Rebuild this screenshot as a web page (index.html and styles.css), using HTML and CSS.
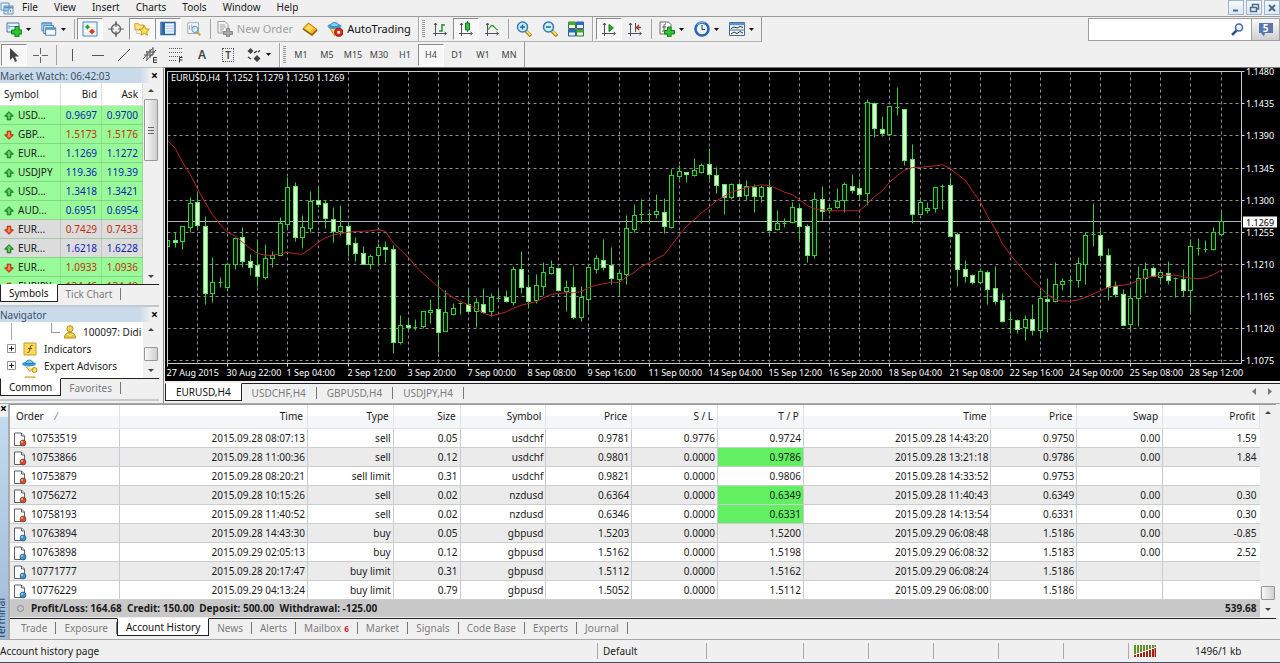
FILE: index.html
```html
<!DOCTYPE html>
<html lang="en">
<head>
    <meta charset="UTF-8">
    <meta name="viewport" content="width=device-width, initial-scale=1.0">
    <title>EURUSD,H4</title>
    <link rel="stylesheet" href="styles.css">
</head>
<body>
    <svg class="sprite" aria-hidden="true">
        <symbol id="caret" viewBox="0 0 5 3"><path d="M0 0h5L2.5 3z" fill="#111"/></symbol>
        <symbol id="arrow-up" viewBox="0 0 10 10"><path d="M5 .7L9.4 5 6.8 5.4V8.8H3.2V5.4L.6 5z" fill="#3fae3f" stroke="#127a1c"/><path d="M5 2.4v5" stroke="#9be29b"/></symbol>
        <symbol id="arrow-down" viewBox="0 0 10 10"><path d="M5 9.3L.6 5l2.6-.4V1.2h3.6v3.4l2.6.4z" fill="#f0562c" stroke="#b32a10"/><path d="M5 2.4v4.6" stroke="#ffc09a"/></symbol>
        <symbol id="doc" viewBox="0 0 14 15"><path d="M1.5 1h7l3 3v9.500h-10z" fill="#fff" stroke="#5c6066"/><path d="M8.500 1v3h3" fill="#dde" stroke="#5c6066"/></symbol>
        <symbol id="plus-box" viewBox="0 0 9 9"><path d="M.5.5h8v8h-8z" fill="#fff" stroke="#919191"/><path d="M2 4.500h5M4.500 2v5" stroke="#222"/></symbol>
        <symbol id="axes" viewBox="0 0 16 16"><path d="M3.500 15V2M1 12.500h13M2 4l1.500-2L5 4M12.500 11l2 1.500-2 1.500" fill="none" stroke="#4c5258"/></symbol>
        <symbol id="lens" viewBox="0 0 16 16"><path d="M10 10l5 5" stroke="#a97a1c" stroke-width="3.500"/><path d="M10.500 10l4 4" stroke="#ffd95e" stroke-width="2"/><circle cx="6.500" cy="6" r="5" fill="#d3effc" stroke="#2d7db8" stroke-width="1.500"/></symbol>
    </svg>

    <div class="app">
        <header class="menubar">
            <svg class="app-icon" viewBox="0 0 14 13"><path d="M1 1h8v7H1zM4 4h9v8H4z" fill="#e5f1fa" stroke="#5f93bd"/><path d="M4 5.500h9" stroke="#5f93bd" stroke-width="2"/><path d="M6 10V8M8 11V8M10.500 10V8" stroke="#4a90c4"/></svg>
            <nav class="menus">
                <a href="#">File</a><a href="#">View</a><a href="#">Insert</a><a href="#">Charts</a><a href="#">Tools</a><a href="#">Window</a><a href="#">Help</a>
            </nav>
            <div class="window-buttons">
                <button aria-label="Minimize"><svg viewBox="0 0 12 10"><path d="M3 7.500h5" stroke="#4e6a88" stroke-width="2"/></svg></button>
                <button aria-label="Restore"><svg viewBox="0 0 12 10"><path d="M4.500 4V1.500h6V6H8.500M2.500 4.500h6v4h-6z" fill="none" stroke="#4e6a88" stroke-width="1.400"/></svg></button>
                <button aria-label="Close"><svg viewBox="0 0 12 10"><path d="M3 2l6 6M9 2L3 8" stroke="#4e6a88" stroke-width="2"/></svg></button>
            </div>
        </header>

        <div class="toolbar-row">
            <div class="toolbar">
                <button class="tool drop" aria-label="New chart"><svg viewBox="0 0 16 16"><path d="M1 2h12v9H1z" fill="#e9f3fb" stroke="#43749f"/><path d="M3 8V4M3 5.500h6" stroke="#6f9cc2"/><path d="M9 5.500h4V9h3v4h-3v3H9v-3H5.500V9H9z" fill="#2fc52f" stroke="#0f7d16"/></svg><svg class="caret"><use href="#caret"/></svg></button>
                <button class="tool drop" aria-label="Profiles"><svg viewBox="0 0 18 16"><path d="M1 1h11v9H1z" fill="#dfeefa" stroke="#3f78ae"/><path d="M3 4h11v9H3z" fill="#dfeefa" stroke="#3f78ae"/><path d="M5 6.500h11.500v8.500H5z" fill="#f5faff" stroke="#3f78ae"/><path d="M1 2h11M5 8h11" stroke="#67a0d4" stroke-width="2"/></svg><svg class="caret"><use href="#caret"/></svg></button>
                <span class="sep"></span>
                <button class="tool pressed" aria-label="Market Watch"><svg viewBox="0 0 16 16"><path d="M1 1h14v14H1z" fill="#fff" stroke="#3c83bd"/><path d="M2 3h12M2 6h12M2 9h12M2 12h12" stroke="#d5e4ee"/><path d="M5.500 3.500l2.500 2.500-2.500 2.500L3 6z" fill="#22a02c"/><path d="M10 7.500l3 3-3 3-3-3z" fill="#e23c1d"/></svg></button>
                <button class="tool" aria-label="Data Window"><svg viewBox="0 0 16 16"><circle cx="8" cy="8" r="4.500" fill="none" stroke="#666" stroke-width="1.500"/><path d="M8 0v6M8 10v6M0 8h6M10 8h6" stroke="#666"/><path d="M6.500 3L8 .5 9.500 3M6.500 13L8 15.500 9.500 13" fill="#666"/></svg></button>
                <button class="tool pressed" aria-label="Navigator"><svg viewBox="0 0 18 16"><path d="M1 2h4l1 1.500h5V9H1z" fill="#ffe489" stroke="#c8961d"/><path d="M3 10v3h4" fill="none" stroke="#999" stroke-dasharray="1 1"/><path d="M11.500 4l1.800 3.800 4 .4-3 2.800.9 4-3.700-2-3.700 2 .9-4-3-2.800 4-.4z" fill="#ffdf4e" stroke="#be8b12"/></svg></button>
                <button class="tool pressed" aria-label="Terminal"><svg viewBox="0 0 16 16"><path d="M1 1.500h14v12H1z" fill="#e7f1fb" stroke="#2d66a2" stroke-width="1.500"/><path d="M3.500 2v11" stroke="#2d66a2" stroke-width="3"/><path d="M6 5h8M6 7.500h8M6 10h8" stroke="#b7cfe4"/></svg></button>
                <button class="tool" aria-label="Strategy Tester"><svg viewBox="0 0 18 16"><path d="M2 1h12v12H2z" fill="#fff" stroke="#8aa0b2"/><path d="M4 9V4M6.500 7V3M9 10V4" stroke="#7c93a6"/><path d="M12 11l4 4" stroke="#d8a03a" stroke-width="2.500"/><circle cx="10" cy="8.500" r="3.500" fill="#cfe8fa" fill-opacity=".8" stroke="#4a83b5"/></svg></button>
                <span class="sep"></span>
                <button class="tool labelled" disabled><svg viewBox="0 0 16 16"><path d="M1 .5h7l3 3V12H1z" fill="#f4f4f4" stroke="#9a9a9a"/><path d="M3 4h5M3 6h6M3 8h4M3 10h3" stroke="#a2a2a2"/><path d="M9.500 7.500h3v3h3v3h-3V16h-3v-2.500h-3v-3h3z" fill="#a7a7a7" stroke="#858585"/></svg>New Order</button>
                <button class="tool" aria-label="MetaEditor"><svg viewBox="0 0 16 16"><path d="M1 7.500L6.500 2l8.500 6.500-5 5z" fill="#f5b81d" stroke="#b5780b"/><path d="M3 7.500L7 3.500l4.500 3.500-4 4z" fill="#ffdb62"/><path d="M1 8l9 6 5-5" fill="none" stroke="#8f5d08" stroke-width="1.500"/></svg></button>
                <button class="tool labelled auto"><svg viewBox="0 0 17 16"><path d="M3 7l5 8 6-7z" fill="#f7cf52" stroke="#b98a1b"/><ellipse cx="8" cy="5" rx="7.500" ry="3" fill="#3e9fd9"/><path d="M3.500 4.500C4 0 12 0 12.500 4.500 10 6 6 6 3.500 4.500z" fill="#88cef2" stroke="#3284bb"/><circle cx="12.500" cy="11.500" r="4.300" fill="#d92918" stroke="#941207"/><path d="M11 10h3v3h-3z" fill="#fff"/></svg>AutoTrading</button>
                <span class="sep end"></span><span class="grip"></span>
                <button class="tool" aria-label="Bar Chart"><svg viewBox="0 0 16 16"><use href="#axes"/><path d="M7 10h3V3.500M10 4h3M10 10.500V3" fill="none" stroke="#21942c" stroke-width="1.500"/></svg></button>
                <button class="tool pressed" aria-label="Candlesticks"><svg viewBox="0 0 16 16"><use href="#axes"/><path d="M9.500 0v11" stroke="#15761e"/><path d="M7.500 2h4v7h-4z" fill="#37c043" stroke="#15761e"/></svg></button>
                <button class="tool" aria-label="Line Chart"><svg viewBox="0 0 16 16"><use href="#axes"/><path d="M3 9c3-1 3-4.500 5-4.500S11 8 14 9" fill="none" stroke="#2c9d38" stroke-width="1.300"/></svg></button>
                <span class="sep"></span>
                <button class="tool" aria-label="Zoom In"><svg viewBox="0 0 16 16"><use href="#lens"/><path d="M4 6h5M6.500 3.500v5" stroke="#2369a1" stroke-width="1.500"/></svg></button>
                <button class="tool" aria-label="Zoom Out"><svg viewBox="0 0 16 16"><use href="#lens"/><path d="M4 6h5" stroke="#2369a1" stroke-width="1.500"/></svg></button>
                <button class="tool" aria-label="Tile Windows"><svg viewBox="0 0 16 16"><path d="M.5 1h7v6.500h-7zM8.500 8.500h7V15h-7z" fill="#eef8e9" stroke="#32762c"/><path d="M8.500 1h7v6.500h-7zM.5 8.500h7V15h-7z" fill="#e8f2fc" stroke="#265d9c"/><path d="M.5 2.500h7M8.500 10h7" stroke="#4fa733" stroke-width="3"/><path d="M8.500 2.500h7M.5 10h7" stroke="#2c6fbb" stroke-width="3"/></svg></button>
                <span class="sep end"></span>
                <button class="tool pressed" aria-label="Auto Scroll"><svg viewBox="0 0 16 16"><use href="#axes"/><path d="M8 3.500l4.500 3.500L8 10.500z" fill="#2aad37" stroke="#157a20"/></svg></button>
                <button class="tool" aria-label="Chart Shift"><svg viewBox="0 0 16 16"><use href="#axes"/><path d="M8.500 2v9" stroke="#4c5258"/><path d="M14 6.500H9.500M12 4L9.500 6.500 12 9" fill="none" stroke="#a5381f" stroke-width="1.400"/></svg></button>
                <span class="sep"></span>
                <button class="tool drop" aria-label="Indicators"><svg viewBox="0 0 16 16"><path d="M1 1h8.500L12 3.500V13H1z" fill="#fff" stroke="#666"/><path d="M7 3c-2-.5-2 1-2 3v3c0 1.500-1 1.500-2 1M3 6h4" fill="none" stroke="#555"/><path d="M8.500 6h3.500v3.500h3.500V13H12v3H8.500v-3H5.500V9.500h3z" fill="#2fc52f" stroke="#0f7d16"/></svg><svg class="caret"><use href="#caret"/></svg></button>
                <button class="tool drop" aria-label="Periods"><svg viewBox="0 0 16 16"><circle cx="8" cy="8" r="6.500" fill="#edf6fd" stroke="#2268ae" stroke-width="2.500"/><path d="M3 4a6.500 6.500 0 0 1 8-2" fill="none" stroke="#7ab9ea" stroke-width="1.200"/><path d="M8 4v4.500h3" fill="none" stroke="#333"/></svg><svg class="caret"><use href="#caret"/></svg></button>
                <button class="tool drop" aria-label="Templates"><svg viewBox="0 0 16 16"><path d="M.5 1.500h15v13H.5z" fill="#f4f9fd" stroke="#426c94"/><path d="M.5 3h15" stroke="#5c95c8" stroke-width="2.500"/><path d="M1 9h14" stroke="#426c94"/><path d="M2 7.500l3-1.500 3 1 3-1.500 3 1M2 13l3-2 3 1.500 3-2 3 1.500" fill="none" stroke="#333"/></svg><svg class="caret"><use href="#caret"/></svg></button>
            </div>
            <form class="search">
                <input type="text" aria-label="Search">
                <button type="button" class="find" aria-label="Find"><svg viewBox="0 0 13 13"><circle cx="8" cy="4.500" r="3.500" fill="#f0f6fc" stroke="#4168a8" stroke-width="1.500"/><path d="M5.500 7.500L1 12" stroke="#31558f" stroke-width="2.500"/></svg></button>
                <button type="button" class="chat" aria-label="Messages"><svg viewBox="0 0 16 15"><path d="M1 1h14v10H7l-1 3.500L3 11H1z" fill="#5b76ad"/></svg><span>5</span></button>
            </form>
        </div>

        <div class="toolbar-row second">
            <div class="toolbar">
                <button class="tool pressed" aria-label="Cursor"><svg viewBox="0 0 16 16"><path d="M4 1v12l3-2.700L9 15l2-1-2-4.500h4z" fill="#444"/></svg></button>
                <button class="tool" aria-label="Crosshair"><svg viewBox="0 0 16 16"><path d="M8.500 1v6M8.500 10v6M1 8.500h6M10 8.500h6" stroke="#666"/></svg></button>
                <span class="sep"></span>
                <button class="tool" aria-label="Vertical Line"><svg viewBox="0 0 16 16"><path d="M8.500 2v12" stroke="#555"/></svg></button>
                <button class="tool" aria-label="Horizontal Line"><svg viewBox="0 0 16 16"><path d="M2 8.500h12" stroke="#555"/></svg></button>
                <button class="tool" aria-label="Trendline"><svg viewBox="0 0 16 16"><path d="M2 14L14 2" stroke="#555"/></svg></button>
                <button class="tool" aria-label="Equidistant Channel"><svg viewBox="0 0 16 16"><path d="M1 12L11 1M4 14L14 3M2 8h9M4 5h9M5 13V4M8 11V2M11 8V0" stroke="#555"/><path d="M15 10.500h-3.500v5H15M11.500 13H15" fill="none" stroke="#333"/></svg></button>
                <button class="tool" aria-label="Fibonacci"><svg viewBox="0 0 16 16"><path d="M1 1.500h14M1 5.500h14M1 9.500h14M1 13.500h8" stroke="#555" stroke-dasharray="1 1"/><path d="M14.500 10.500h-3v5M11.500 13h3" fill="none" stroke="#333"/></svg></button>
                <button class="tool letter">A</button>
                <button class="tool letter"><span class="boxed">T</span></button>
                <button class="tool drop" aria-label="Arrows"><svg viewBox="0 0 16 16"><path d="M4.500 1l3 3-3 3-3-3zM11 8l3.500 3.500L11 15l-3.500-3.500z" fill="#444"/><path d="M8 6l3-2M2 10l3 2M12 5l2-1.500" stroke="#444" stroke-width="1.500"/></svg><svg class="caret"><use href="#caret"/></svg></button>
                <span class="sep end"></span><span class="grip"></span>
                <button class="tool">M1</button><button class="tool">M5</button><button class="tool">M15</button><button class="tool">M30</button><button class="tool">H1</button><button class="tool pressed">H4</button><button class="tool">D1</button><button class="tool">W1</button><button class="tool">MN</button>
            </div>
        </div>

        <main class="workspace">
            <aside class="dock">
                <section class="panel">
                    <h2>Market Watch: 06:42:03<button class="close" aria-label="Close">×</button></h2>
                    <div class="scroll-area market">
                        <table class="quotes">
                            <colgroup><col class="q-symbol"><col class="q-bid"><col class="q-ask"></colgroup>
                            <thead><tr><th>Symbol</th><th>Bid</th><th>Ask</th></tr></thead>
                            <tbody id="quotes"></tbody>
                        </table>
                        <div class="scrollbar"><span class="up"></span><span class="thumb long"></span><span class="down"></span></div>
                    </div>
                    <div class="tabs"><button class="active">Symbols</button><button>Tick Chart</button></div>
                </section>
                <section class="panel">
                    <h2>Navigator<button class="close" aria-label="Close">×</button></h2>
                    <div class="scroll-area navigator">
                        <ul class="tree">
                            <li class="account"><svg viewBox="0 0 14 15"><circle cx="7" cy="4" r="3.300" fill="#f5d255" stroke="#b18a1c"/><path d="M1 14c0-4 2-6 6-6s6 2 6 6z" fill="#efc33a" stroke="#b18a1c"/><path d="M4 9.500l3 2 3-2" fill="none" stroke="#fff3b5"/></svg>100097: Didi</li>
                            <li><svg class="toggle"><use href="#plus-box"/></svg><svg viewBox="0 0 14 14"><path d="M1 1h12v12H1z" fill="#fbd95f" stroke="#c79b24"/><path d="M9.500 3.500c-2-.5-2 .5-2.500 3s-.5 4.500-2.500 4M5 6.500h4" fill="none" stroke="#634c0c"/></svg>Indicators</li>
                            <li><svg class="toggle"><use href="#plus-box"/></svg><svg viewBox="0 0 16 14"><ellipse cx="7" cy="5" rx="7" ry="2.500" fill="#3d9ad4"/><path d="M3.500 4.500C4 0 10.500 0 11 4.500z" fill="#7cc6ee" stroke="#2f83ba"/><path d="M4 7.500l4 5 3-3" fill="#fae08b" stroke="#c2962d"/><circle cx="12.500" cy="11" r="2.500" fill="#ffe064" stroke="#b98b15"/></svg>Expert Advisors</li>
                            <li><svg class="toggle"></svg><svg viewBox="0 0 14 14"><path d="M2 1h10v12H2z" fill="#fbe08a" stroke="#c79b24"/></svg></li>
                        </ul>
                        <div class="scrollbar"><span class="up"></span><span class="thumb low"></span><span class="down"></span></div>
                    </div>
                    <div class="tabs"><button class="active">Common</button><button>Favorites</button></div>
                </section>
            </aside>

            <section class="chart-window">
                <svg id="chart" class="chart" viewBox="0 0 1115 313" role="img" aria-label="EURUSD,H4"></svg>
                <div class="tabs chart-tabs">
                    <button class="active">EURUSD,H4</button><button>USDCHF,H4</button><button>GBPUSD,H4</button><button>USDJPY,H4</button>
                    <span class="pager"><svg viewBox="0 0 20 7"><path d="M4 0v7L0 3.500zM16 0v7l4-3.500z" fill="#777"/></svg></span>
                </div>
            </section>
        </main>

        <section class="terminal">
            <div class="side"><button class="close" aria-label="Close">×</button><span>Terminal</span></div>
            <div class="terminal-main">
                <div class="scroll-area">
                    <table class="history">
                        <colgroup>
                            <col class="c-order"><col class="c-time"><col class="c-num"><col class="c-size"><col class="c-num"><col class="c-num"><col class="c-num"><col class="c-num"><col class="c-time"><col class="c-num"><col class="c-num"><col class="c-profit">
                        </colgroup>
                        <thead><tr><th>Order <i>/</i></th><th>Time</th><th>Type</th><th>Size</th><th>Symbol</th><th>Price</th><th>S / L</th><th>T / P</th><th>Time</th><th>Price</th><th>Swap</th><th>Profit</th></tr></thead>
                        <tbody id="history"></tbody>
                        <tfoot><tr><td colspan="11"><span class="dot"></span>Profit/Loss: 164.68&nbsp; Credit: 150.00&nbsp; Deposit: 500.00&nbsp; Withdrawal: -125.00</td><td>539.68</td></tr></tfoot>
                    </table>
                    <div class="scrollbar"><span class="up"></span><span class="thumb low"></span><span class="down"></span></div>
                </div>
                <div class="tabs terminal-tabs">
                    <button>Trade</button><button>Exposure</button><button class="active">Account History</button><button>News</button><button>Alerts</button><button>Mailbox<b>6</b></button><button>Market</button><button>Signals</button><button>Code Base</button><button>Experts</button><button>Journal</button>
                </div>
            </div>
        </section>

        <footer class="statusbar">
            <span class="hint">Account history page</span>
            <span class="profile">Default</span>
            <span class="cell wide"></span><span class="cell"></span><span class="cell"></span><span class="cell"></span><span class="cell"></span><span class="cell"></span>
            <span class="traffic"><svg viewBox="0 0 22 12"><path d="M1 0v9M4 0v8M7 0v7M10 0v6M13 0v5M16 0v4M19 0v3M21.500 0v2" stroke="#5f9423" stroke-width="2"/><path d="M1 12v-2M4 12V9M7 12V8M10 12V7M13 12V6M16 12V5M19 12V4M21.500 12V3" stroke="#a32317" stroke-width="2"/></svg>1496/1 kb</span>
        </footer>
    </div>

    <script src="script.js"></script>
</body>
</html>
```
FILE: styles.css
```css
* {
    box-sizing: border-box;
}
body {
    margin: 0;
    background-color: #f0f0f0;
    color: #1a1a1a;
    font-family: "Noto Sans", "Open Sans", sans-serif;
    font-size: 10px;
    line-height: 14px;
}
button, input {
    font: inherit;
    color: inherit;
    margin: 0;
    padding: 0;
    border: none;
    background: none;
}
.sprite {
    display: none;
}
.app {
    display: flex;
    flex-direction: column;
    min-height: 100vh;
    border-bottom: 1px solid #3f4f66;
}

/* menu */
.menubar {
    display: flex;
    align-items: center;
    height: 17px;
    border-bottom: 1px solid #9a9a9a;
}
.app-icon {
    width: 14px;
    height: 13px;
}
.menus {
    display: flex;
    flex: 1;
    gap: 16px;
    padding: 0 0 2px 8px;
}
.menus a {
    color: #1a1a1a;
    text-decoration: none;
}
.window-buttons {
    display: flex;
    gap: 2px;
    align-self: flex-start;
}
.window-buttons button {
    width: 16px;
    height: 15px;
    border: 1px solid #9db4cc;
    background: linear-gradient(#f4f9fe, #dbe8f5);
}
.window-buttons svg {
    display: block;
    width: 12px;
    height: 10px;
    margin: auto;
}

/* toolbars */
.toolbar-row {
    display: flex;
    justify-content: space-between;
    height: 25px;
}
.toolbar {
    display: flex;
    align-items: center;
    padding: 0 2px 0 1px;
    border-right: 1px solid #999;
    border-bottom: 1px solid #b4b4b4;
}
.second .toolbar {
    border-bottom: none;
}
.tool {
    display: flex;
    align-items: center;
    justify-content: center;
    width: 26px;
    height: 22px;
    color: #444;
    font-size: 9px;
}
.tool svg {
    width: 16px;
    height: 16px;
}
.tool.drop {
    width: 35px;
    gap: 4px;
}
.tool svg.caret {
    width: 5px;
    height: 3px;
}
.tool.pressed {
    border: 1px solid;
    border-color: #8c8c8c #fff #fff #8c8c8c;
    background-color: #f8f8f8;
}
.tool.labelled {
    width: 84px;
    gap: 4px;
    font-size: 11px;
}
.tool.auto {
    width: 92px;
    color: #111;
}
.tool:disabled {
    color: #a0a0a0;
}
.tool.letter {
    font-size: 12px;
    font-weight: 600;
}
.boxed {
    padding: 0 2px;
    border: 1px dotted #555;
    line-height: 12px;
    font-size: 10px;
}
.sep {
    width: 1px;
    height: 20px;
    margin: 0 2px 0 3px;
    background-color: #a5a5a5;
}
.sep.end {
    width: 2px;
    height: 24px;
    border-right: 1px solid #fff;
}
.grip {
    width: 3px;
    height: 18px;
    margin-right: 2px;
    background: repeating-linear-gradient(#999 0 1px, #f0f0f0 1px 2px);
}
.search {
    display: flex;
    align-items: center;
    height: 23px;
    margin-top: 1px;
    border: 1px solid #a0a0a0;
    background-color: #fff;
}
.search input {
    width: 142px;
    height: 20px;
    outline: none;
}
.find {
    width: 20px;
}
.find svg {
    display: block;
    width: 13px;
    height: 13px;
}
.chat {
    display: grid;
    place-items: center;
    width: 28px;
    height: 21px;
    border-left: 1px solid #a0a0a0;
    background: linear-gradient(#fafafa, #cfcfcf);
}
.chat svg, .chat span {
    grid-area: 1 / 1;
}
.chat svg {
    width: 16px;
    height: 15px;
}
.chat span {
    padding-bottom: 3px;
    line-height: 10px;
    color: #fff;
    font-weight: bold;
}

/* docked panels */
.workspace {
    display: flex;
    border-bottom: 1px solid #a9a9a9;
}
.dock {
    width: 164px;
    padding-right: 4px;
    border-top: 1px solid #bdbdbd;
    border-right: 1px solid #888;
}
.panel {
    border-bottom: 2px solid #c3c9d0;
}
.panel h2 {
    display: flex;
    justify-content: space-between;
    align-items: center;
    height: 15px;
    margin: 0;
    background: linear-gradient(90deg, #c9dbeb 0 88%, #f0f0f0 95%);
    color: #3c5068;
    font-size: 10px;
    font-weight: normal;
}
.close {
    width: 9px;
    line-height: 10px;
    color: #000;
    font-size: 12px;
    font-weight: bold;
}
.scroll-area {
    display: flex;
    overflow: hidden;
}
.market {
    height: 201px;
}
.quotes {
    flex: 1;
    height: 0;
    table-layout: fixed;
    border-collapse: collapse;
    background-color: #fff;
}
.q-symbol {
    width: 61px;
}
.q-bid, .q-ask {
    width: 41px;
}
.quotes th, .quotes td {
    height: 19px;
    padding: 0 4px 0 0;
    border-right: 1px solid rgba(130, 170, 130, .35);
    border-bottom: 1px solid rgba(110, 180, 110, .5);
    text-align: right;
}
.quotes th {
    height: 22px;
    border-color: #ddd;
    font-weight: normal;
}
.quotes th:first-child, .quotes td:first-child {
    padding-left: 4px;
    text-align: left;
}
.quotes td {
    background-color: #98fb98;
}
.quotes .flat td {
    background-color: #dcdcdc;
}
.quotes svg {
    width: 10px;
    height: 10px;
    margin-right: 4px;
    vertical-align: -2px;
}
.quotes .rise td + td {
    color: #0a1fb4;
}
.quotes .fall td + td {
    color: #c0300c;
}
.scrollbar {
    display: flex;
    flex-direction: column;
    align-items: center;
    width: 16px;
    padding: 6px 0;
    background-color: #f0f0f0;
}
.scrollbar .up, .scrollbar .down {
    border: 3px solid transparent;
    border-top: none;
    border-bottom: 3px solid #444;
}
.scrollbar .down {
    margin-top: auto;
    border-bottom: none;
    border-top: 3px solid #444;
}
.thumb {
    width: 14px;
    height: 14px;
    border: 1px solid #999;
    border-radius: 1px;
    background: linear-gradient(90deg, #f8f8f8, #cfcfcf);
}
.thumb.long {
    display: grid;
    place-items: center;
    height: 62px;
    margin-top: 7px;
}
.thumb.long::before {
    content: "";
    width: 6px;
    height: 7px;
    background: repeating-linear-gradient(#666 0 1px, transparent 1px 3px);
}
.thumb.low {
    margin-top: auto;
}
.scrollbar .low + .down {
    margin-top: 8px;
}
.tabs {
    display: flex;
    border-top: 1px solid #222;
    color: #7c7c7c;
}
.tabs button {
    height: 12px;
    margin-top: 3px;
    padding: 0 8px;
    border-right: 1px solid #777;
    line-height: 12px;
}
.tabs .active {
    height: 18px;
    margin-top: -1px;
    border: 1px solid #222;
    border-top: 1px solid #fff;
    background-color: #fff;
    color: #111;
    line-height: 14px;
}
.dock .tabs {
    height: 21px;
}
.navigator {
    height: 56px;
    background-color: #fff;
}
.tree {
    flex: 1;
    margin: 0;
    padding: 1px 0 0;
    list-style: none;
    white-space: nowrap;
    overflow: hidden;
}
.tree li {
    display: flex;
    align-items: center;
    gap: 6px;
    height: 17px;
    padding-left: 7px;
}
.tree li svg {
    width: 16px;
    height: 14px;
}
.tree li svg.toggle {
    width: 9px;
    height: 9px;
}
.tree .account {
    padding-left: 62px;
    background: linear-gradient(90deg, #999, #999) 51px 9px / 9px 1px no-repeat, linear-gradient(#999, #999) 51px 0 / 1px 9px no-repeat, linear-gradient(#aaa, #aaa) 11px 0 / 1px 17px no-repeat;
    gap: 5px;
}

/* chart */
.chart-window {
    display: flex;
    flex: 1;
    flex-direction: column;
    min-width: 0;
    padding-left: 1px;
    border-top: 1px solid #777;
}
.chart {
    display: block;
    width: 100%;
    background-color: #000;
}
.chart text {
    fill: #fff;
    font-size: 9px;
}
.chart .title {
    font-size: 9px;
}
.chart .grid {
    stroke: #8b9096;
    stroke-dasharray: 3 3;
}
.chart .frame {
    fill: none;
    stroke: #d0d0d0;
}
.chart .bid {
    stroke: #a9b0b8;
}
.chart .average {
    fill: none;
    stroke: #b8262c;
}
.chart .wick, .chart .bull {
    stroke: #35cf35;
}
.chart .bull {
    fill: #001a00;
}
.chart .bear {
    fill: #d6ffd0;
    stroke: #5fe65f;
}
.chart .tag {
    fill: #fff;
}
.chart .tag-text {
    fill: #000;
}
.chart-tabs {
    height: 20px;
    margin-top: 2px;
}
.chart-tabs button {
    padding: 0 10px;
}
.pager {
    margin: 4px 8px 0 auto;
}
.pager svg {
    display: block;
    width: 20px;
    height: 7px;
}

/* terminal */
.terminal {
    display: flex;
    padding-right: 4px;
}
.side {
    display: flex;
    flex-direction: column;
    justify-content: space-between;
    width: 10px;
    overflow: hidden;
    background: linear-gradient(#f0f0f0 13px, #c3daef 13px, #9dbad8);
    border-right: 2px solid #aaa;
}
.side .close {
    width: 6px;
}
.side span {
    width: 14px;
    margin-left: -6px;
    writing-mode: vertical-rl;
    transform: rotate(180deg);
    color: #24405f;
}
.terminal-main {
    flex: 1;
    min-width: 0;
    border-top: 1px solid #999;
}
.history {
    flex: 1;
    table-layout: fixed;
    border-collapse: collapse;
    background-color: #fff;
}
.c-order {
    width: 110px;
}
.c-time {
    width: 188px;
}
.c-num {
    width: 86px;
}
.c-size {
    width: 67px;
}
.c-profit {
    width: 97px;
}
.history th, .history td {
    height: 19px;
    padding: 0 2px 0 0;
    border-right: 1px solid #c8ccd1;
    border-bottom: 1px solid #ccc;
    text-align: right;
}
.history th {
    height: 23px;
    padding-right: 4px;
    border-color: #e2e2e2;
    background: linear-gradient(#fff 50%, #f5f6f7 50%);
    font-weight: normal;
}
.history th:first-child {
    padding-left: 6px;
    text-align: left;
}
.history th i {
    margin-left: 8px;
    color: #888;
}
.history tbody tr:nth-child(even) td {
    background-color: #ebebeb;
}
.history tbody td:first-child {
    padding-left: 3px;
    text-align: left;
}
.history td:last-child {
    padding-right: 3px;
    border-right: none;
}
.history tbody tr td.hit, .history tbody tr:nth-child(even) td.hit {
    background-color: #62f062;
}
.history svg {
    width: 14px;
    height: 15px;
    margin: -2px 4px -2px 0;
    vertical-align: -3px;
}
.history tfoot td {
    height: 18px;
    border: none;
    background-color: #c8c8c8;
    font-weight: bold;
}
.history tfoot td:first-child {
    padding-left: 7px;
    text-align: left;
}
.dot {
    display: inline-block;
    width: 7px;
    height: 7px;
    margin-right: 7px;
    border: 1px solid #888;
    border-radius: 50%;
}
.terminal-tabs {
    height: 21px;
    margin-top: 1px;
    padding-left: 3px;
}
.terminal-tabs b {
    margin-left: 3px;
    color: #d81e2c;
    font-size: 8px;
}

/* status bar */
.statusbar {
    display: flex;
    flex: 1;
    align-items: center;
    min-height: 21px;
    border-top: 1px solid #a9a9a9;
}
.statusbar span {
    display: flex;
    align-items: center;
    height: 16px;
    padding-left: 5px;
    border-left: 1px solid #aaa;
}
.statusbar .hint {
    flex: 1;
    padding: 0;
    border: none;
}
.statusbar .profile {
    width: 109px;
}
.statusbar .cell {
    width: 65px;
}
.statusbar .cell.wide {
    width: 97px;
}
.statusbar .traffic {
    width: 152px;
    gap: 39px;
}
.traffic svg {
    width: 22px;
    height: 12px;
}
```
FILE: script.js
```js
// Quotes: symbol, bid, ask, direction, no change today
const quotes = [
    ["USD...", "0.9697", "0.9700", "rise"],
    ["GBP...", "1.5173", "1.5176", "fall"],
    ["EUR...", "1.1269", "1.1272", "rise"],
    ["USDJPY", "119.36", "119.39", "rise"],
    ["USD...", "1.3418", "1.3421", "rise"],
    ["AUD...", "0.6951", "0.6954", "rise"],
    ["EUR...", "0.7429", "0.7433", "fall", true],
    ["EUR...", "1.6218", "1.6228", "rise", true],
    ["EUR...", "1.0933", "1.0936", "fall"],
    ["EURJPY", "134.46", "134.49", "fall"]
];

document.getElementById("quotes").innerHTML = quotes.map(([symbol, bid, ask, dir, flat]) => `
    <tr class="${dir}${flat ? " flat" : ""}">
        <td><svg><use href="#arrow-${dir === "rise" ? "up" : "down"}"/></svg>${symbol}</td>
        <td>${bid}</td><td>${ask}</td>
    </tr>`).join("");

const orders = [
    ["10753519", "2015.09.28 08:07:13", "sell", "0.05", "usdchf", "0.9781", "0.9776", "0.9724", "2015.09.28 14:43:20", "0.9750", "0.00", "1.59"],
    ["10753866", "2015.09.28 11:00:36", "sell", "0.12", "usdchf", "0.9801", "0.0000", "0.9786", "2015.09.28 13:21:18", "0.9786", "0.00", "1.84"],
    ["10753879", "2015.09.28 08:20:21", "sell limit", "0.31", "usdchf", "0.9821", "0.0000", "0.9806", "2015.09.28 14:33:52", "0.9753", "", ""],
    ["10756272", "2015.09.28 10:15:26", "sell", "0.02", "nzdusd", "0.6364", "0.0000", "0.6349", "2015.09.28 11:40:43", "0.6349", "0.00", "0.30"],
    ["10758193", "2015.09.28 11:40:52", "sell", "0.02", "nzdusd", "0.6346", "0.0000", "0.6331", "2015.09.28 14:13:54", "0.6331", "0.00", "0.30"],
    ["10763894", "2015.09.28 14:43:30", "buy", "0.05", "gbpusd", "1.5203", "0.0000", "1.5200", "2015.09.29 06:08:48", "1.5186", "0.00", "-0.85"],
    ["10763898", "2015.09.29 02:05:13", "buy", "0.12", "gbpusd", "1.5162", "0.0000", "1.5198", "2015.09.29 06:08:32", "1.5183", "0.00", "2.52"],
    ["10771777", "2015.09.28 20:17:47", "buy limit", "0.31", "gbpusd", "1.5112", "0.0000", "1.5162", "2015.09.29 06:08:24", "1.5186", "", ""],
    ["10776229", "2015.09.29 04:13:24", "buy limit", "0.79", "gbpusd", "1.5052", "0.0000", "1.5112", "2015.09.29 06:08:00", "1.5186", "", ""]
];

document.getElementById("history").innerHTML = orders.map(order => {
    const ball = order[2].startsWith("sell") ? "#dc4a22" : "#2f95d6";
    const icon = `<svg viewBox="0 0 14 15"><use href="#doc"/><circle cx="10" cy="11" r="3" fill="${ball}" stroke="#444" stroke-width=".6"/><circle cx="9" cy="10" r="1" fill="#fff" fill-opacity=".6"/></svg>`;
    // T/P is highlighted when the order closed at it
    return "<tr>" + order.map((value, i) =>
        `<td${i === 7 && value === order[9] ? ' class="hit"' : ""}>${i === 0 ? icon : ""}${value}</td>`).join("") + "</tr>";
}).join("");

// Candles: high, body top, body bottom, low, 1 = bull, 0 = bear.
// Values are distances down the plot, in thirds of a unit.
const candles = [
    [450,525,542,615,1],[500,525,531,545,0],[482,482,528,553,1],[397,415,487,500,1],[385,412,480,490,0],
    [452,482,683,718,0],[577,650,685,710,1],[636,650,650,665,1],[590,596,667,678,1],[515,520,598,612,1],
    [487,517,588,605,0],[568,588,605,630,0],[522,600,633,664,0],[536,580,637,641,1],[558,570,579,605,1],
    [457,475,571,571,1],[336,367,476,490,1],[352,363,517,528,0],[450,487,517,550,1],[379,409,490,500,1],
    [367,406,417,427,0],[406,415,460,490,0],[427,463,499,530,0],[421,482,499,510,1],[472,483,536,573,0],
    [517,535,563,587,0],[543,565,596,596,0],[568,572,598,611,1],[535,547,571,596,1],[528,545,553,590,0],
    [541,553,832,863,0],[750,781,832,836,1],[763,780,786,796,0],[761,785,788,796,0],[739,739,784,789,1],
    [702,736,742,775,1],[641,733,800,862,0],[674,742,797,797,1],[714,730,747,750,1],[712,714,717,746,1],
    [674,718,738,740,0],[700,712,738,787,1],[668,717,741,745,0],[683,697,738,753,1],[676,700,702,702,1],
    [674,696,708,710,0],[603,612,710,720,1],[558,612,667,684,0],[627,666,707,727,0],[627,660,704,715,1],
    [591,621,664,690,1],[586,606,623,627,1],[606,609,675,678,0],[645,666,678,738,1],[603,666,755,763,0],
    [662,697,755,768,1],[604,606,701,738,1],[570,580,611,624,1],[523,585,605,614,0],[547,600,639,658,0],
    [612,623,641,684,1],[450,490,628,658,1],[417,451,493,502,1],[403,447,449,473,1],[441,447,447,473,1],
    [387,438,447,460,1],[399,441,483,505,0],[312,331,485,489,1],[301,318,334,342,1],[320,322,327,350,0],
    [278,316,331,333,1],[295,300,320,325,1],[250,297,328,343,0],[307,330,359,385,0],[357,358,395,446,0],
    [355,358,397,402,1],[352,358,392,395,0],[346,364,391,406,1],[358,366,393,441,0],[361,367,394,412,1],
    [348,367,494,498,0],[436,474,493,494,1],[460,473,476,487,1],[411,427,472,475,1],[417,430,483,523,0],
    [476,483,571,590,0],[381,403,569,580,1],[363,402,438,465,0],[421,429,436,443,1],[369,409,427,430,1],
    [352,358,406,441,1],[327,362,374,384,0],[349,370,387,400,0],[103,112,385,421,1],[112,115,190,217,0],
    [154,193,204,213,0],[124,124,206,208,1],[66,125,130,150,0],[132,133,286,300,0],[238,283,447,475,0],
    [400,412,448,448,1],[412,430,436,445,1],[366,367,430,441,1],[357,364,364,433,1],[337,361,512,515,0],
    [502,508,613,662,0],[586,612,632,650,0],[628,629,650,658,0],[610,618,650,651,1],[616,620,672,717,0],
    [602,669,708,717,0],[685,706,769,771,0],[745,763,765,804,1],[762,766,791,803,0],[751,762,787,826,1],
    [717,763,796,811,0],[674,700,794,820,1],[640,703,708,802,0],[591,657,707,710,1],[640,649,658,674,1],
    [637,646,649,697,1],[577,595,644,667,1],[500,511,597,658,1],[415,508,508,544,1],[489,511,571,587,0],
    [550,571,666,706,0],[649,662,686,697,0],[672,688,779,780,0],[670,700,776,797,1],[603,640,700,784,1],
    [592,612,640,684,1],[603,610,632,634,0],[618,622,635,648,1],[589,625,644,658,0],[637,640,640,697,1],
    [612,643,675,694,0],[523,544,675,738,1],[518,548,552,570,0],[525,552,556,561,0],[486,502,553,556,1],
    [438,469,506,511,1]
];

// Moving average, one value per candle
const average = [
    225,250,290,328,370,412,448,478,500,512,530,549,564,569,569,565,560,565,566,549,
    530,517,508,504,500,498,497,496,492,498,533,553,576,602,625,645,664,682,697,708,
    718,730,743,751,746,739,728,719,714,708,697,686,684,682,682,678,666,659,655,650,
    650,634,620,603,592,580,567,539,508,483,462,442,424,406,392,380,373,366,362,358,
    360,370,380,388,402,421,430,433,436,436,436,436,436,414,393,376,350,330,314,306,
    306,303,301,298,310,327,345,377,410,452,492,535,568,594,620,644,667,688,702,707,
    707,703,696,685,676,665,661,659,655,644,637,632,630,629,629,634,638,639,637,627,614
];

const days = ["27 Aug 2015", "30 Aug 22:00", "1 Sep 04:00", "2 Sep 12:00", "3 Sep 20:00", "7 Sep 00:00",
    "8 Sep 08:00", "9 Sep 16:00", "11 Sep 00:00", "14 Sep 04:00", "15 Sep 12:00", "16 Sep 20:00",
    "18 Sep 04:00", "21 Sep 08:00", "22 Sep 16:00", "24 Sep 00:00", "25 Sep 08:00", "28 Sep 12:00"];

const left = 2.5, right = 1076.5, plotTop = 3.5, bottom = 295.5;
const x = i => Math.round(left + i * 7.525 - 0.5) + 0.5;
const y = v => Math.round(v / 3 - 3) + 0.5;
let out = "";

// Grid and price scale
for (let k = 0; k < 10; k++) {
    const gy = y(19 + k * 96.2);
    out += `<line class="grid" x1="${left}" x2="${right}" y1="${gy}" y2="${gy}"/>`;
    out += `<line class="frame" x1="${right}" x2="${right + 3}" y1="${gy}" y2="${gy}"/>`;
    out += `<text x="1081" y="${gy + 3}">${(1.148 - k * 0.0045).toFixed(4)}</text>`;
}
for (let i = 4; i <= 140; i += 4) {
    out += `<line class="grid" x1="${x(i)}" x2="${x(i)}" y1="${plotTop}" y2="${bottom}"/>`;
}
days.forEach((day, n) => {
    const dx = x(n * 8);
    out += `<line class="frame" x1="${dx}" x2="${dx}" y1="${bottom}" y2="${bottom + 3}"/>`;
    out += `<text x="${dx - 1}" y="308">${day}</text>`;
});

out += `<line class="bid" x1="${left}" x2="${right}" y1="${y(469)}" y2="${y(469)}"/>`;

candles.forEach(([high, bodyTop, bodyBottom, low, bull], i) => {
    const cx = x(i), from = y(bodyTop), to = y(bodyBottom);
    out += `<line class="wick" x1="${cx}" x2="${cx}" y1="${y(high)}" y2="${y(low)}"/>`;
    if (to - from < 2) {
        out += `<line class="wick" x1="${cx - 2}" x2="${cx + 2}" y1="${from}" y2="${from}"/>`;
    } else {
        out += `<rect class="${bull ? "bull" : "bear"}" x="${i ? cx - 2 : cx}" y="${from}" width="${i ? 4 : 2}" height="${to - from}"/>`;
    }
});

out += `<polyline class="average" points="${average.map((v, i) => x(i) + "," + (v / 3 - 2.5).toFixed(1)).join(" ")}"/>`;
out += `<path class="frame" d="M${left} ${bottom}V${plotTop}H${right}V${bottom}z"/>`;
out += `<text class="title" x="6" y="13">EURUSD,H4&#160; 1.1252 1.1279 1.1250 1.1269</text>`;
out += `<rect class="tag" x="1078" y="${y(469) - 5}" width="34" height="11"/><text class="tag-text" x="1081" y="${y(469) + 4}">1.1269</text>`;
document.getElementById("chart").innerHTML = out;
```
